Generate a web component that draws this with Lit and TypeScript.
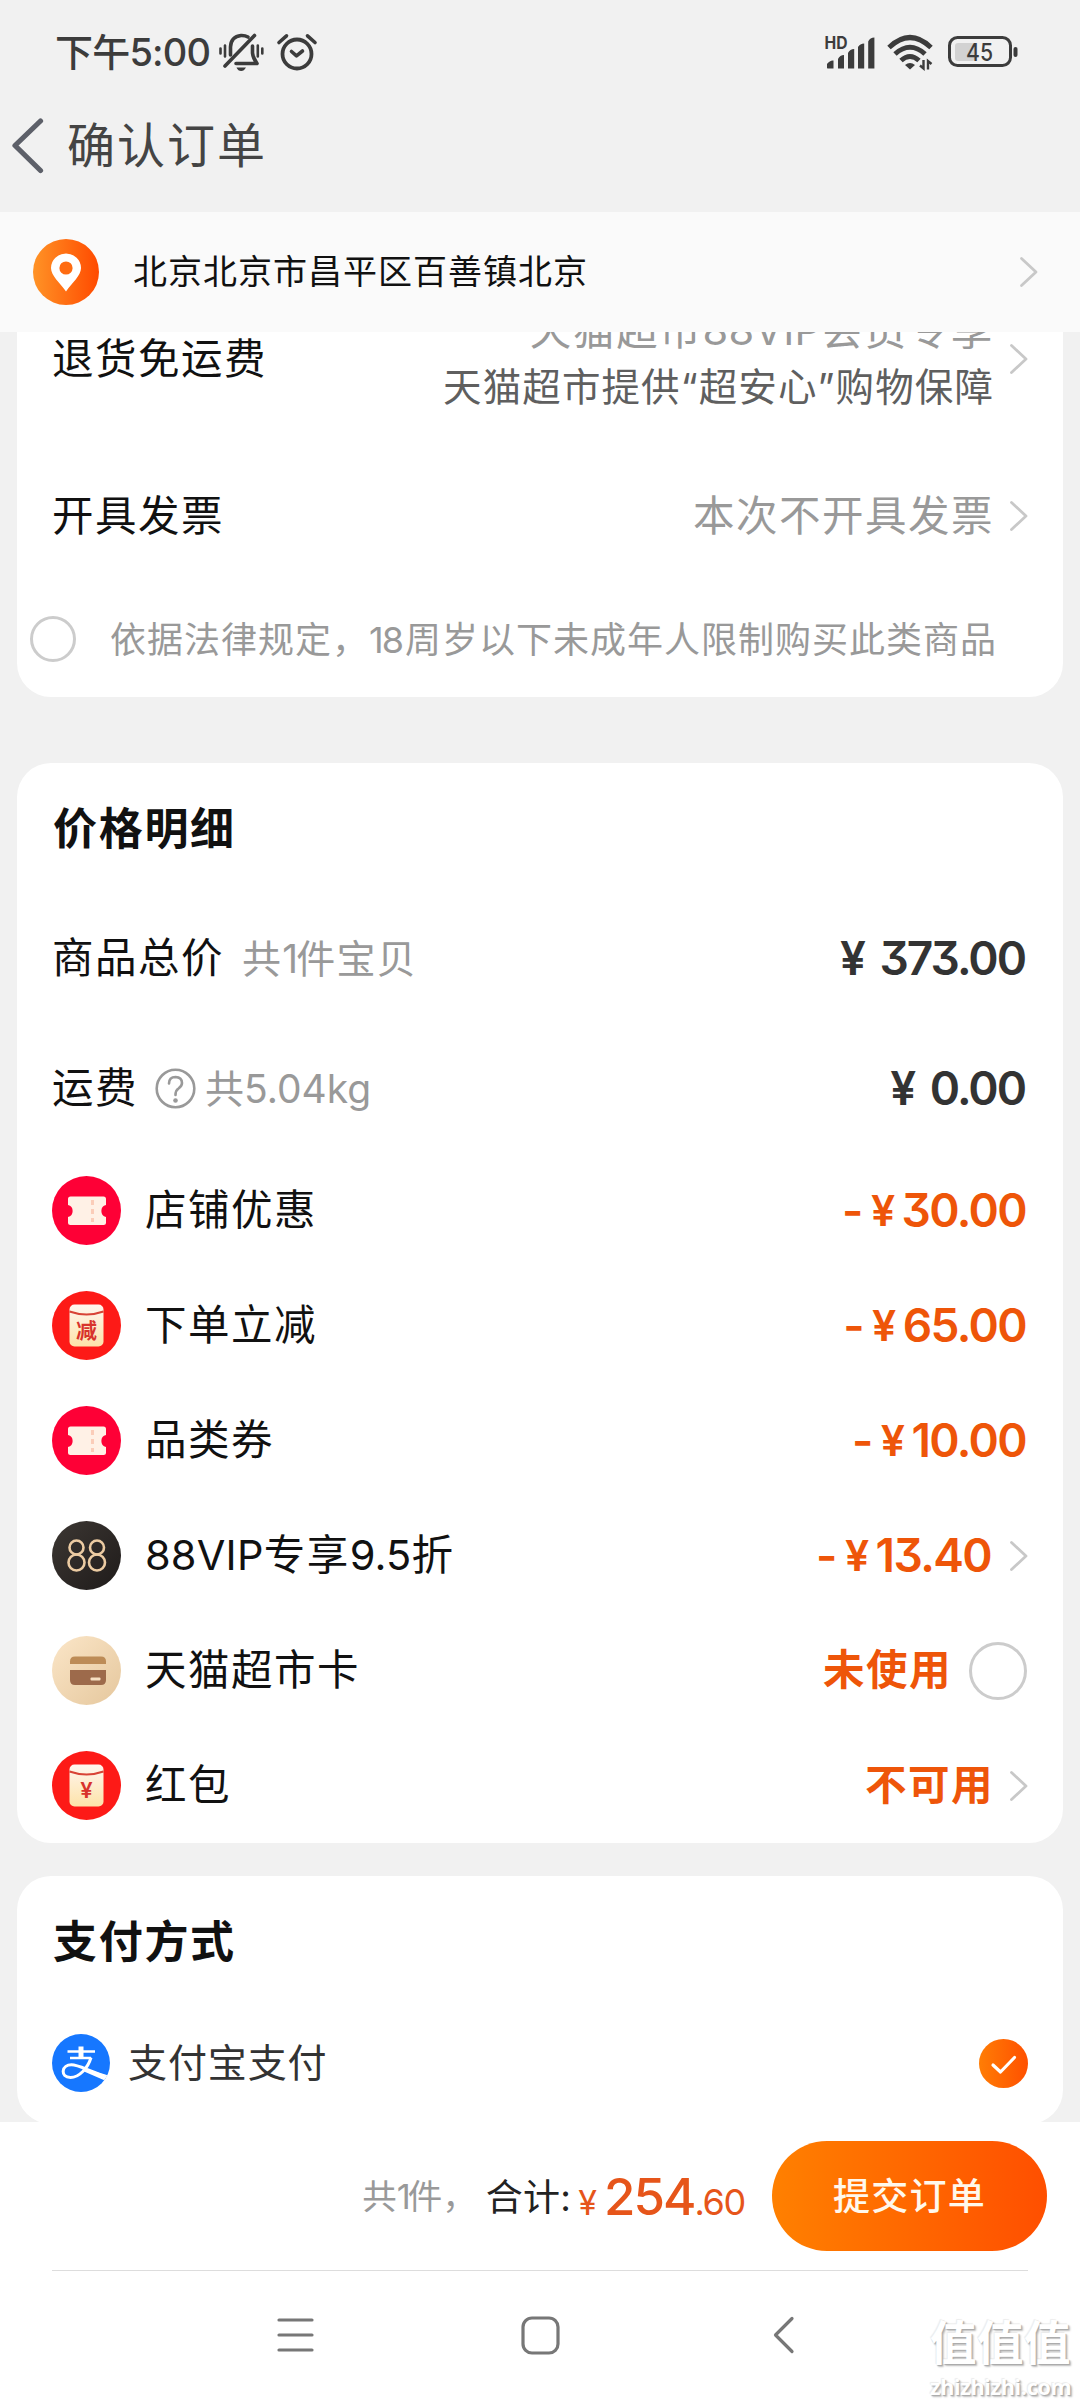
import { LitElement, html, css, svg, nothing } from "lit";
import { customElement, property } from "lit/decorators.js";

type IconName = "ticket" | "minus" | "vip" | "card" | "packet";

interface Discount {
  icon: IconName;
  label: string;
  value: string;
  kind: "price" | "word";
  trailing?: "arrow" | "radio";
}

const DISCOUNTS: Discount[] = [
  { icon: "ticket", label: "店铺优惠", value: "30.00", kind: "price" },
  { icon: "minus", label: "下单立减", value: "65.00", kind: "price" },
  { icon: "ticket", label: "品类券", value: "10.00", kind: "price" },
  { icon: "vip", label: "88VIP专享9.5折", value: "13.40", kind: "price", trailing: "arrow" },
  { icon: "card", label: "天猫超市卡", value: "未使用", kind: "word", trailing: "radio" },
  { icon: "packet", label: "红包", value: "不可用", kind: "word", trailing: "arrow" },
];

// Latin letters and digits are set tighter than the Chinese text around them.
const mixed = (text: string) =>
  text
    .split(/([\x21-\x7e]+)/)
    .filter((part) => part !== "")
    .map((part) => (/^[\x21-\x7e]/.test(part) ? html`<span class="lat">${part}</span>` : part));

const ticket = svg`
  <circle cx="34.5" cy="34.5" r="34.5" fill="#fe0036"/>
  <path d="M18.500 20.500H51.500Q54 20.500 54 23V29A6.200 6.200 0 0 0 54 41V46.500Q54 49 51.500 49H18.500Q16 49 16 46.500V41A6.200 6.200 0 0 0 16 29V23Q16 20.500 18.500 20.500Z" fill="#fff1e6"/>
  <path d="M40.500 24V46" stroke="#fbcdb9" stroke-width="3" stroke-dasharray="5 4"/>`;

const envelope = (mark: string, size: number, y: number) => svg`
  <defs><linearGradient id="env" x1="0" y1="0" x2="0" y2="1">
    <stop offset="0" stop-color="#fff6ef"/><stop offset="1" stop-color="#fde3a9"/>
  </linearGradient></defs>
  <circle cx="34.500" cy="34.500" r="34.500" fill="#fd1a17"/>
  <rect x="17.500" y="13.500" width="34" height="42" rx="5" fill="url(#env)"/>
  <path d="M17.500 20.500Q34.500 26.500 51.500 20.500" fill="none" stroke="#d84335" stroke-width="2"/>
  <text class="mark" x="34.500" y=${y} font-size=${size} text-anchor="middle">${mark}</text>`;

@customElement("row-icon")
export class RowIcon extends LitElement {
  static styles = css`
    :host { display: block; width: 69px; height: 69px; }
    svg { display: block; }
    .mark { fill: #d8332c; font-family: Inter, "Noto Sans CJK SC", sans-serif; font-weight: 600; }
  `;
  @property() name: IconName = "ticket";

  private art() {
    switch (this.name) {
      case "ticket":
        return ticket;
      case "minus":
        return envelope("减", 21, 46.5);
      case "packet":
        return envelope("¥", 22, 47);
      case "vip":
        return svg`
          <defs><linearGradient id="dark" x1="0" y1="0" x2="1" y2="1">
            <stop offset="0" stop-color="#3c3733"/><stop offset="1" stop-color="#1f1b1a"/>
          </linearGradient></defs>
          <circle cx="34.500" cy="34.500" r="34.500" fill="url(#dark)"/>
          <g fill="none" stroke="#eccba2" stroke-width="2.600">
            <circle cx="24.500" cy="26.500" r="7"/><circle cx="24.500" cy="41.500" r="8"/>
            <circle cx="45" cy="26.500" r="7"/><circle cx="45" cy="41.500" r="8"/>
          </g>`;
      case "card":
        return svg`
          <defs><linearGradient id="sand" x1="0" y1="0" x2="1" y2="1">
            <stop offset="0" stop-color="#fbe6c8"/><stop offset="1" stop-color="#e5c79d"/>
          </linearGradient></defs>
          <circle cx="34.500" cy="34.500" r="34.500" fill="url(#sand)"/>
          <path d="M18 28V25.500Q18 20.500 23 20.500H49Q54 20.500 54 25.500V28Z" fill="#bd8c57"/>
          <path d="M18 34H54V44Q54 49 49 49H23Q18 49 18 44Z" fill="#9d6a4b"/>
          <rect x="38.500" y="41.500" width="10" height="3" rx="1" fill="#f6dfc3"/>`;
    }
  }

  render() {
    return html`<svg width="69" height="69" viewBox="0 0 69 69">${this.art()}</svg>`;
  }
}

const arrow = html`<svg class="arrow" width="20" height="32" viewBox="0 0 20 32">
  <path d="M2.500 2.500L17 16L2.500 29.500" fill="none" stroke="#c8c8c8" stroke-width="2.800" stroke-linecap="round" stroke-linejoin="round"/>
</svg>`;

@customElement("status-bar")
export class StatusBar extends LitElement {
  static styles = css`
    :host { display: flex; height: 104px; align-items: center; padding: 0 62px 0 55px; box-sizing: border-box; color: #3c3c3c; }
    svg { display: block; flex: none; overflow: visible; }
    .time { font-size: 38px; line-height: 50px; font-weight: 500; letter-spacing: -0.800px; width: 164px; white-space: nowrap; }
    .alarm { margin-left: 13px; }
    .spacer { flex: 1; }
    .wifi { margin-left: 11px; }
    .battery { margin-left: 14px; }
    .hd { font-size: 17px; font-weight: 700; fill: #3c3c3c; }
    .level { font-size: 24px; font-weight: 500; fill: #3c3c3c; }
  `;

  render() {
    return html`
      <span class="time">下午5:00</span>
      <svg width="45" height="39" viewBox="0 0 45 39" fill="none" stroke="#3c3c3c" stroke-width="3.600" stroke-linecap="round">
        <path d="M6 33L35.500 2.500"/>
        <path d="M11.500 22V14Q12 3.500 22 2.500Q26 2.300 29 4"/>
        <path d="M33.500 13V20Q34 25 38 30.500H17" stroke-linejoin="round"/>
        <path d="M17.500 34.500H27Q25 38 22.200 38Q19 38 17.500 34.500Z" fill="#3c3c3c" stroke="none"/>
        <path d="M1.500 15.500V20.500M6 12.500V23.500M38.800 12.500V23.500M43.300 15.500V20.500" stroke-width="2.600"/>
      </svg>
      <svg class="alarm" width="40" height="38" viewBox="0 0 40 38" fill="none" stroke="#3c3c3c" stroke-linecap="round" stroke-linejoin="round">
        <circle cx="20" cy="21" r="14.500" stroke-width="3.800"/>
        <path d="M2 9.500L9.500 2.800M38 9.500L30.500 2.800" stroke-width="3.600"/>
        <path d="M14.500 18.500L19.500 22.800L25.500 18" stroke-width="3.600"/>
      </svg>
      <span class="spacer"></span>
      <svg width="52" height="35" viewBox="0 0 52 35" fill="#3c3c3c">
        <text class="hd" x="0.500" y="13.500" textLength="23" lengthAdjust="spacingAndGlyphs">HD</text>
        <path d="M3 33V29Q6 25 9.500 25.500V33.500H3.500ZM14 33.500V24Q16 20 20 20V33.500ZM24 33.500V18Q26 14 30.200 14V33.500ZM34 33.500V12Q36 8.500 40.200 8.500V33.500ZM44.200 33.500V6.500Q46 2.500 50.400 2.500V33.500Z"/>
      </svg>
      <svg class="wifi" width="47" height="36" viewBox="0 0 47 36" fill="none" stroke="#3c3c3c" stroke-width="5">
        <path d="M2 13.500Q23 -6.500 44 13.500"/>
        <path d="M8 20Q23 6.500 38 20"/>
        <path d="M14 26.500Q23 18.500 32 26.500"/>
        <path d="M18 31Q23 27 28 31L23 35.500Z" fill="#3c3c3c" stroke="none"/>
        <path d="M36.500 26V34.500L33 31.500M41 35.500V27L44.500 30" stroke-width="2.400"/>
      </svg>
      <svg class="battery" width="70" height="32" viewBox="0 0 70 32">
        <rect x="7" y="7" width="20" height="18" rx="3" fill="#d2d2d2"/>
        <rect x="1.500" y="1.500" width="61" height="28" rx="8" fill="none" stroke="#3c3c3c" stroke-width="3"/>
        <rect x="65.500" y="11" width="4" height="10" rx="2" fill="#3c3c3c"/>
        <text class="level" x="31.500" y="24.500" text-anchor="middle" textLength="27" lengthAdjust="spacingAndGlyphs">45</text>
      </svg>
    `;
  }
}

@customElement("app-root")
export class AppRoot extends LitElement {
  static styles = css`
    :host {
      display: flex; flex-direction: column; position: relative; width: 1080px; height: 2400px;
      background: #f1f1f1; overflow: hidden; color: #111;
      font-family: Inter, "Noto Sans CJK SC", sans-serif; font-feature-settings: "cv09";
    }
    svg { display: block; flex: none; }
    span { white-space: nowrap; }
    .lat { letter-spacing: 0.200px; }
    .title-bar { display: flex; align-items: center; height: 108px; padding: 0 0 25px 11px; box-sizing: border-box; gap: 23px; color: #444; }
    .title { font-size: 48px; letter-spacing: 2px; line-height: 60px; }
    .address { display: flex; align-items: center; height: 120px; padding: 0 41px 0 33px; box-sizing: border-box; background: #fafafa; }
    .address-text { flex: 1; margin-left: 34px; padding-bottom: 5px; font-size: 34px; letter-spacing: 1px; }
    .scroll { height: 1790px; overflow: hidden; }
    .card { margin: 0 17px; background: #fff; border-radius: 34px; box-sizing: border-box; }
    .services { height: 395px; margin-top: -30px; border-radius: 0 0 34px 34px; }
    .row { display: flex; align-items: center; justify-content: space-between; padding: 0 36px 0 35px; box-sizing: border-box; }
    .label { font-size: 41.500px; letter-spacing: 1.500px; padding-bottom: 7px; }
    .side { display: flex; align-items: center; gap: 15px; margin-right: -2px; }
    .notes { display: flex; flex-direction: column; align-items: flex-end; line-height: 57px; }
    .member { font-size: 41.500px; letter-spacing: 1.700px; color: #999; }
    .promise { font-size: 38.500px; letter-spacing: 1.100px; color: #5f5f5f; }
    .service-row { height: 114px; }
    .invoice-row { height: 80px; margin-top: 60px; }
    .invoice { font-size: 41.500px; letter-spacing: 1.500px; color: #999; padding-bottom: 7px; }
    .age-row { display: flex; align-items: center; height: 80px; margin-top: 43px; padding-left: 13px; gap: 34px; }
    .age { font-size: 36px; letter-spacing: 1px; color: #999; padding-bottom: 5px; }
    .ring { box-sizing: border-box; width: 46px; height: 46px; border: 3px solid #ccc; border-radius: 50%; flex: none; }
    .ring.large { width: 58px; height: 58px; margin: 0 2px 0 2px; }
    .prices { height: 1080px; margin-top: 66px; padding-top: 36px; }
    .heading { height: 60px; line-height: 60px; margin: 0; padding-left: 36px; font-size: 44px; font-weight: 700; letter-spacing: 1.700px; }
    .sum { height: 130px; }
    .sums { padding-top: 34px; }
    .lead { display: flex; align-items: center; }
    .hint { font-size: 39px; letter-spacing: 1.200px; color: #999; margin-left: 18px; padding-bottom: 5px; }
    .narrow { margin-right: -3px; }
    .hint.weight { margin-left: 9px; letter-spacing: 0; }
    .question { margin-left: 17px; }
    .amount { font-size: 46px; font-weight: 600; color: #333; letter-spacing: -2px; word-spacing: 6px; margin-right: 2px; }
    .discounts { padding-top: 0; }
    .discount { height: 115px; }
    .discount .label { margin-left: 24px; }
    .off { display: flex; align-items: center; font-size: 46px; font-weight: 600; color: #ee5509; letter-spacing: -1.600px; padding-bottom: 2px; margin-right: 3px; }
    .off .yen { margin: 0 8px 0 9px; font-size: 43px; }
    .word { font-size: 41.500px; font-weight: 600; color: #ee5509; letter-spacing: 1.500px; padding-bottom: 7px; }
    .pay { height: 248px; margin-top: 33px; padding-top: 36px; }
    .pay-row { height: 82px; margin-top: 50px; padding-right: 35px; }
    .pay-name { font-size: 39px; letter-spacing: 0.900px; color: #333; margin-left: 18px; padding-bottom: 7px; }
    .submit-bar { display: flex; align-items: center; justify-content: flex-end; height: 148px; padding: 0 33px 0 0; background: #fff; box-sizing: border-box; flex: none; }
    .count { font-size: 34.500px; color: #999; margin-right: 9px; padding-bottom: 4px; }
    .total-label { font-size: 37px; color: #222; letter-spacing: 0.300px; padding-bottom: 3px; }
    .total { display: flex; align-items: baseline; color: #e6551a; margin: 0 27px 0 7px; }
    .total-yen { font-size: 34px; margin-right: 7px; }
    .total-int { font-size: 51px; font-weight: 450; letter-spacing: -2px; }
    .total-dec { font-size: 36px; letter-spacing: -1.300px; }
    .submit { width: 275px; height: 110px; border: 0; padding: 0 0 4px; border-radius: 55px; background: linear-gradient(90deg, #ff8000, #ff4f00); color: #fff8ec; font: 500 37px Inter, "Noto Sans CJK SC", sans-serif; letter-spacing: 1.300px; }
    .nav { flex: 1; background: #fff; padding: 0 52px; position: relative; }
    .line { height: 1px; background: #ddd; }
    .nav-icons { display: flex; justify-content: space-between; align-items: center; padding: 0 233px 0 225px; height: 128px; }
    .home { margin-right: 7px; }
    .watermark { position: absolute; right: 4px; bottom: -4px; width: 146px; display: flex; flex-direction: column; color: #fff; text-shadow: 1px 1px 1px #aaa, 2px 2px 2px #c0c0c0, -1px -1px 1px #ececec; }
    .wm-mark { font-size: 46.500px; line-height: 54px; font-weight: 700; letter-spacing: 0.500px; }
    .wm-site { font-family: "Open Sans", sans-serif; font-size: 21.500px; line-height: 34px; font-weight: 700; letter-spacing: -0.300px; }
  `;

  private trailing(d: Discount) {
    if (d.trailing === "arrow") return arrow;
    if (d.trailing === "radio") return html`<i class="ring large"></i>`;
    return nothing;
  }

  render() {
    return html`
      <status-bar></status-bar>
      <header class="title-bar">
        <svg width="33" height="58" viewBox="0 0 33 58"><path d="M29.500 4L4 28.500L29.500 53.500" fill="none" stroke="#5d6069" stroke-width="5.200" stroke-linecap="round" stroke-linejoin="round"/></svg>
        <span class="title">确认订单</span>
      </header>
      <section class="address">
        <svg width="66" height="66" viewBox="0 0 66 66">
          <defs><linearGradient id="pin" x1="0" y1="0" x2="1" y2="0"><stop offset="0" stop-color="#ff9326"/><stop offset="1" stop-color="#ff4a00"/></linearGradient></defs>
          <circle cx="33" cy="33" r="33" fill="url(#pin)"/>
          <path d="M33 52.500C27 44 18 36.500 18 29A15 14.500 0 0 1 48 29C48 36.500 39 44 33 52.500Z" fill="#fff"/>
          <circle cx="33" cy="29" r="6.600" fill="#ff6c12"/>
        </svg>
        <span class="address-text">北京北京市昌平区百善镇北京</span>
        ${arrow}
      </section>

      <main class="scroll">
        <section class="card services">
          <div class="row service-row">
            <span class="label">退货免运费</span>
            <div class="side">
              <div class="notes">
                <span class="member">${mixed("天猫超市88VIP会员专享")}</span>
                <span class="promise">天猫超市提供“超安心”购物保障</span>
              </div>
              ${arrow}
            </div>
          </div>
          <div class="row invoice-row">
            <span class="label">开具发票</span>
            <div class="side"><span class="invoice">本次不开具发票</span>${arrow}</div>
          </div>
          <div class="age-row">
            <i class="ring"></i>
            <span class="age">依据法律规定，<span class="narrow">1</span>8周岁以下未成年人限制购买此类商品</span>
          </div>
        </section>

        <section class="card prices">
          <h2 class="heading">价格明细</h2>
          <div class="sums">
            <div class="row sum">
              <div class="lead"><span class="label">商品总价</span><span class="hint">共<span class="narrow">1</span>件宝贝</span></div>
              <span class="amount">¥ 373.00</span>
            </div>
            <div class="row sum">
              <div class="lead">
                <span class="label">运费</span>
                <svg class="question" width="41" height="41" viewBox="0 0 41 41" fill="none" stroke="#999" stroke-width="2.600">
                  <circle cx="20.500" cy="20.500" r="18.800"/>
                  <path d="M14 15.500Q14 9 20.500 9Q27 9.300 27 15Q27 18 23.500 20.500Q20.500 22.500 20.500 27" stroke-linecap="round"/>
                  <circle cx="20.500" cy="32.500" r="2.300" fill="#999" stroke="none"/>
                </svg>
                <span class="hint weight">共5.04kg</span>
              </div>
              <span class="amount">¥ 0.00</span>
            </div>
          </div>
          <div class="discounts">
            ${DISCOUNTS.map(
              (d) => html`<div class="row discount">
                <div class="lead"><row-icon .name=${d.icon}></row-icon><span class="label">${mixed(d.label)}</span></div>
                <div class="side">
                  ${d.kind === "price"
                    ? html`<span class="off">-<span class="yen">¥</span>${d.value}</span>`
                    : html`<span class="word">${d.value}</span>`}
                  ${this.trailing(d)}
                </div>
              </div>`
            )}
          </div>
        </section>

        <section class="card pay">
          <h2 class="heading">支付方式</h2>
          <div class="row pay-row">
            <div class="lead">
              <svg width="58" height="58" viewBox="0 0 58 58">
                <defs><clipPath id="disc"><circle cx="29" cy="29" r="29"/></clipPath></defs>
                <g clip-path="url(#disc)" fill="none" stroke="#fff">
                  <rect width="58" height="58" fill="#1677ff" stroke="none"/>
                  <path d="M15.500 17.500H43M18 24H39" stroke-width="2.600"/>
                  <path d="M29 12.500V24" stroke-width="5"/>
                  <path d="M39 23.500C36 34 27 43.500 18.500 43.500C13 43.500 11 40.500 11.200 37C11.500 33 15 30.800 19.500 30.800C27 30.800 36 37 59 44" stroke-width="3"/>
                  <path d="M34 34.500L60 43.500L54 47L32 37.500Z" fill="#fff" stroke="none"/>
                </g>
              </svg>
              <span class="pay-name">支付宝支付</span>
            </div>
            <svg width="49" height="49" viewBox="0 0 49 49">
              <defs><linearGradient id="ok" x1="0" y1="0" x2="1" y2="0"><stop offset="0" stop-color="#ff7d05"/><stop offset="1" stop-color="#ff5000"/></linearGradient></defs>
              <circle cx="24.500" cy="24.500" r="24.500" fill="url(#ok)"/>
              <path d="M14 26L21.500 33L35.500 18.500" fill="none" stroke="#fff" stroke-width="3.200" stroke-linecap="round" stroke-linejoin="round"/>
            </svg>
          </div>
        </section>
      </main>

      <section class="submit-bar">
        <span class="count">共<span class="narrow">1</span>件，</span>
        <span class="total-label">合计:</span>
        <span class="total"><span class="total-yen">¥</span><span class="total-int">254</span><span class="total-dec">.60</span></span>
        <button class="submit">提交订单</button>
      </section>

      <nav class="nav">
        <div class="line"></div>
        <div class="nav-icons">
          <svg width="37" height="38" viewBox="0 0 37 38" stroke="#777" stroke-width="3.200" stroke-linecap="round"><path d="M2 4H35M2 19H35M2 34H35"/></svg>
          <svg class="home" width="39" height="39" viewBox="0 0 39 39"><rect x="2" y="2" width="35" height="35" rx="9" fill="none" stroke="#777" stroke-width="3.200"/></svg>
          <svg width="22" height="38" viewBox="0 0 22 38"><path d="M19 2.500L2.500 19L19 35.500" fill="none" stroke="#777" stroke-width="3.200" stroke-linecap="round" stroke-linejoin="round"/></svg>
        </div>
        <div class="watermark"><span class="wm-mark">值值值</span><span class="wm-site">zhizhizhi.com</span></div>
      </nav>
    `;
  }
}
